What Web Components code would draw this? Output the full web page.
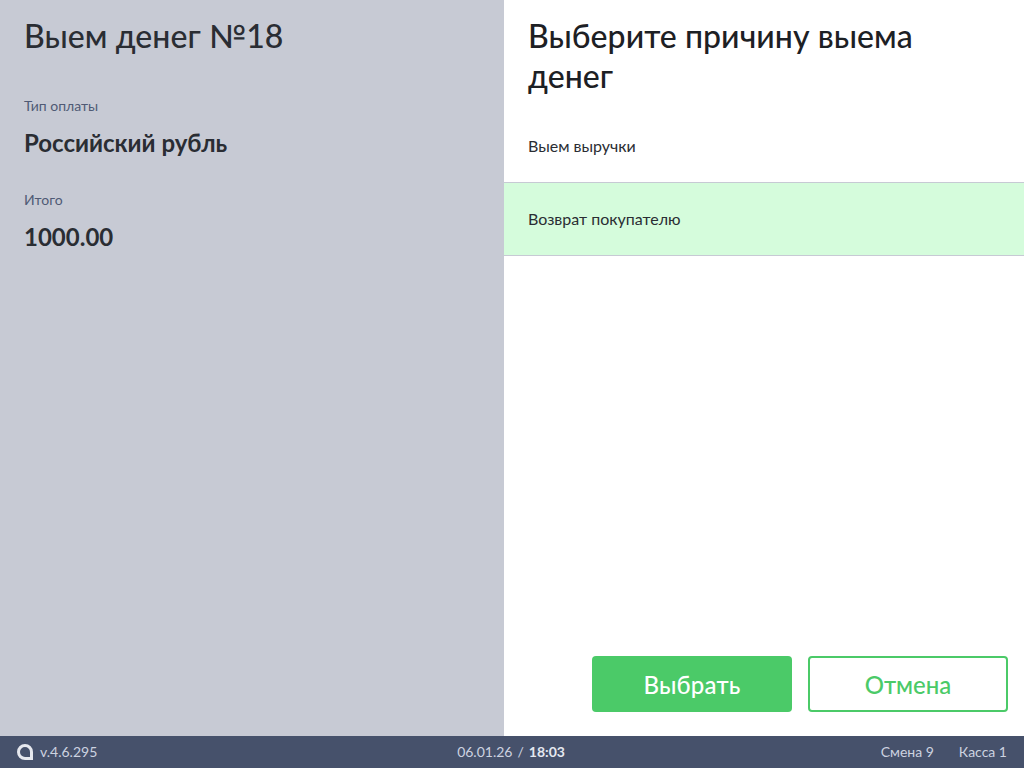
<!DOCTYPE html>
<html><head><meta charset="utf-8"><style>
html,body{margin:0;padding:0;height:100%;overflow:hidden;background:#fff}
body{font-family:Lato,"Noto Sans",sans-serif;color:#22262b}
</style></head><body>
<template id="t-app"><style>
:host{display:flex;flex-direction:column;width:1024px;height:768px}
.main{flex:1;display:flex;min-height:0}
</style><div class="main"><slot name="left"></slot><slot name="right"></slot></div><slot name="bar"></slot></template>
<template id="t-left"><style>
:host{display:block;width:504px;box-sizing:border-box;background:#c7cad4;padding:16px 24px}
h1{margin:0 0 40px;font-size:32px;line-height:40px;font-weight:500;color:#2a2d33;letter-spacing:.05px}
</style><h1><slot name="title"></slot></h1><slot></slot></template>
<template id="t-field"><style>
:host{display:block;margin-bottom:32px}
.l{font-size:14px;line-height:20px;color:#4f5a75}
.v{margin-top:12px;font-size:24px;line-height:30px;font-weight:700;color:#2a2d33}
</style><div class="l"><slot name="label"></slot></div><div class="v"><slot></slot></div></template>
<template id="t-right"><style>
:host{display:flex;flex-direction:column;width:520px;box-sizing:border-box;background:#fff}
h2{margin:0;padding:16px 80px 14px 24px;font-size:32px;line-height:40px;font-weight:500;color:#1d2024;letter-spacing:.05px}
.list{flex:1}
.act{display:flex;justify-content:flex-end;gap:16px;padding:0 16px 24px}
</style><h2><slot name="title"></slot></h2><div class="list"><slot></slot></div><div class="act"><slot name="actions"></slot></div></template>
<template id="t-row"><style>
:host{display:block;box-sizing:border-box;height:73px;padding:0 24px;font-size:16px;line-height:72px;border-bottom:1px solid #c7cad4;color:#2a2d33}
:host([selected]){background:#d5fcdc}
</style><slot></slot></template>
<template id="t-btn"><style>
:host{display:flex;align-items:center;justify-content:center;box-sizing:border-box;width:200px;height:56px;border-radius:4px;font-size:24px;font-weight:500;background:#4bca68;color:#fff;letter-spacing:.2px}
:host([outline]){background:#fff;border:2px solid #4bca68;color:#4bca68;letter-spacing:0}
</style><slot></slot></template>
<template id="t-bar"><style>
:host{display:grid;grid-template-columns:1fr auto 1fr;align-items:center;box-sizing:border-box;height:32px;background:#46516b;color:#cdd3e0;font-size:14px;padding:0 17px 2px 17px}
.a{display:flex;align-items:center;gap:7px}
.c{display:flex;gap:5px;padding-right:2px}
.c b{color:#e4e8f0;font-weight:700}
.r{display:flex;justify-content:flex-end;gap:25px}
svg{display:block;margin-top:2px}
</style><div class="a"><svg width="16" height="16" viewBox="0 0 16 16"><path d="M8 1.5a6.5 6.5 0 1 0 0 13h6.5V8A6.5 6.5 0 0 0 8 1.5Z" fill="none" stroke="#e6e8ee" stroke-width="3"/></svg><span>v.4.6.295</span></div><div class="c"><span>06.01.26</span><span>/</span><b>18:03</b></div><div class="r"><span>Смена 9</span><span>Касса 1</span></div></template>
<script>
for (const [n,t] of [['app-shell','t-app'],['left-pane','t-left'],['info-field','t-field'],['right-pane','t-right'],['reason-row','t-row'],['action-btn','t-btn'],['status-bar','t-bar']]) {
  customElements.define(n, class extends HTMLElement{constructor(){super();this.attachShadow({mode:'open'}).appendChild(document.getElementById(t).content.cloneNode(true));}});
}
</script>
<app-shell>
<left-pane slot="left"><span slot="title">Выем денег №18</span>
<info-field><span slot="label">Тип оплаты</span>Российский рубль</info-field>
<info-field><span slot="label">Итого</span>1000.00</info-field></left-pane>
<right-pane slot="right"><span slot="title">Выберите причину выема денег</span>
<reason-row>Выем выручки</reason-row><reason-row selected>Возврат покупателю</reason-row>
<action-btn slot="actions">Выбрать</action-btn><action-btn slot="actions" outline>Отмена</action-btn></right-pane>
<status-bar slot="bar"></status-bar>
</app-shell>
</body></html>
